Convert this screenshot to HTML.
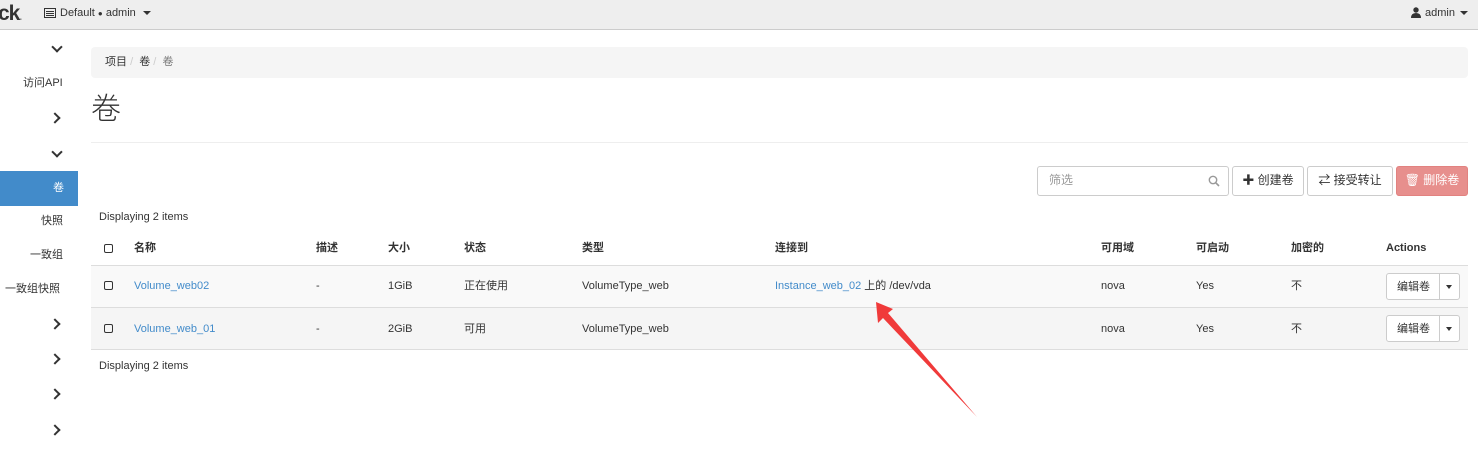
<!DOCTYPE html>
<html><head><meta charset="utf-8"><style>
*{box-sizing:border-box;margin:0;padding:0}
body{width:1478px;height:473px;overflow:hidden;background:#fff;font-family:"Liberation Sans","Noto Sans CJK SC",sans-serif;font-size:11px;color:#333;position:relative}
.a{position:absolute;white-space:nowrap;line-height:15px}
.top{position:absolute;left:0;top:0;width:1478px;height:30px;background:#eee;border-bottom:1px solid #ccc}
.chev{position:absolute;width:8px;height:8px;border-right:2.5px solid #333;border-bottom:2.5px solid #333}
.down{transform:rotate(45deg)}
.right{transform:rotate(-45deg)}
.btn{position:absolute;top:166px;height:30px;border:1px solid #ccc;border-radius:3px;background:#fff;font-size:12px;line-height:27px;text-align:center;color:#333}
.th{font-weight:bold;top:241px}
.cb{position:absolute;width:9px;height:9px;border:1px solid #333;border-radius:2px;left:104px}
.lnk{color:#428bca}
.eb{position:absolute;left:1386px;width:74px;height:27px;border:1px solid #ccc;border-radius:3px;background:#fff}
.eb span{position:absolute;left:10px;top:6px;font-size:11px;line-height:15px}
.eb i{position:absolute;left:52px;top:0;width:1px;height:25px;background:#ccc}
.eb b{position:absolute;left:59px;top:11px;border-left:3.5px solid transparent;border-right:3.5px solid transparent;border-top:4px solid #333}
</style></head><body>
<div class="top"></div>
<div class="a" style="left:-2px;top:3px;font-size:21px;line-height:22px;font-weight:bold;color:#333;letter-spacing:-1px">ck<span style="font-size:10px;color:#888">.</span></div>
<svg class="a" style="left:44px;top:8px" width="12" height="10"><rect x="0.5" y="0.5" width="11" height="9" fill="none" stroke="#333"/><rect x="2" y="3" width="8" height="1" fill="#333"/><rect x="2" y="5" width="8" height="1" fill="#333"/><rect x="2" y="7" width="8" height="1" fill="#333"/></svg>
<div class="a" style="left:60px;top:6px;font-size:11px">Default <span style="font-size:8px">●</span> admin</div>
<div class="a" style="left:143px;top:11px;border-left:4px solid transparent;border-right:4px solid transparent;border-top:4px solid #333"></div>
<svg class="a" style="left:1411px;top:7px" width="10" height="11"><circle cx="5" cy="3" r="2.7" fill="#333"/><path d="M0 11 Q0 6 5 6 Q10 6 10 11Z" fill="#333"/></svg>
<div class="a" style="left:1425px;top:6px">admin</div>
<div class="a" style="left:1460px;top:11px;border-left:4px solid transparent;border-right:4px solid transparent;border-top:4px solid #333"></div>

<div class="chev down" style="left:53px;top:43px"></div>
<div class="a" style="left:23px;top:76px">访问API</div>
<div class="chev right" style="left:51px;top:114px"></div>
<div class="chev down" style="left:53px;top:148px"></div>
<div class="a" style="left:0;top:171px;width:78px;height:35px;background:#428bca"></div>
<div class="a" style="left:53px;top:181px;color:#fff">卷</div>
<div class="a" style="left:41px;top:214px">快照</div>
<div class="a" style="left:30px;top:248px">一致组</div>
<div class="a" style="left:5px;top:282px">一致组快照</div>
<div class="chev right" style="left:51px;top:320px"></div>
<div class="chev right" style="left:51px;top:355px"></div>
<div class="chev right" style="left:51px;top:390px"></div>
<div class="chev right" style="left:51px;top:426px"></div>

<div class="a" style="left:91px;top:47px;width:1377px;height:31px;background:#f5f5f5;border-radius:4px"></div>
<div class="a" style="left:105px;top:55px">项目 <span style="color:#ccc">/</span>&nbsp; 卷 <span style="color:#ccc">/</span>&nbsp; <span style="color:#777">卷</span></div>
<div class="a" style="left:91px;top:92px;font-size:30px;line-height:36px;font-weight:300">卷</div>
<div class="a" style="left:91px;top:142px;width:1377px;height:1px;background:#eee"></div>

<div class="a" style="left:1037px;top:166px;width:192px;height:30px;border:1px solid #ccc;border-radius:3px"></div>
<div class="a" style="left:1049px;top:173px;color:#999;font-size:12px">筛选</div>
<svg class="a" style="left:1208px;top:175px" width="12" height="12"><circle cx="5" cy="5" r="3.7" fill="none" stroke="#999" stroke-width="1.4"/><path d="M7.7 7.7L11 11" stroke="#999" stroke-width="1.6"/></svg>
<div class="btn" style="left:1232px;width:72px">✚ 创建卷</div>
<div class="btn" style="left:1307px;width:86px">⇄ 接受转让</div>
<div class="btn" style="left:1396px;width:72px;background:#e78f8d;border-color:#e28280;color:#fff">🗑 删除卷</div>

<div class="a" style="left:99px;top:210px">Displaying 2 items</div>
<div class="cb" style="top:244px"></div>
<div class="a th" style="left:134px">名称</div>
<div class="a th" style="left:316px">描述</div>
<div class="a th" style="left:388px">大小</div>
<div class="a th" style="left:464px">状态</div>
<div class="a th" style="left:582px">类型</div>
<div class="a th" style="left:775px">连接到</div>
<div class="a th" style="left:1101px">可用域</div>
<div class="a th" style="left:1196px">可启动</div>
<div class="a th" style="left:1291px">加密的</div>
<div class="a th" style="left:1386px">Actions</div>

<div class="a" style="left:91px;top:265px;width:1377px;height:43px;background:#f9f9f9;border-top:1px solid #ddd"></div>
<div class="a" style="left:91px;top:307px;width:1377px;height:43px;background:#f5f5f5;border-top:1px solid #ddd;border-bottom:1px solid #ddd"></div>
<div class="cb" style="top:281px"></div>
<div class="a lnk" style="left:134px;top:279px">Volume_web02</div>
<div class="a" style="left:316px;top:279px">-</div>
<div class="a" style="left:388px;top:279px">1GiB</div>
<div class="a" style="left:464px;top:279px">正在使用</div>
<div class="a" style="left:582px;top:279px">VolumeType_web</div>
<div class="a" style="left:775px;top:279px"><span class="lnk">Instance_web_02</span> 上的 /dev/vda</div>
<div class="a" style="left:1101px;top:279px">nova</div>
<div class="a" style="left:1196px;top:279px">Yes</div>
<div class="a" style="left:1291px;top:279px">不</div>
<div class="eb" style="top:273px"><span>编辑卷</span><i></i><b></b></div>

<div class="cb" style="top:324px"></div>
<div class="a lnk" style="left:134px;top:322px">Volume_web_01</div>
<div class="a" style="left:316px;top:322px">-</div>
<div class="a" style="left:388px;top:322px">2GiB</div>
<div class="a" style="left:464px;top:322px">可用</div>
<div class="a" style="left:582px;top:322px">VolumeType_web</div>
<div class="a" style="left:1101px;top:322px">nova</div>
<div class="a" style="left:1196px;top:322px">Yes</div>
<div class="a" style="left:1291px;top:322px">不</div>
<div class="eb" style="top:315px"><span>编辑卷</span><i></i><b></b></div>

<div class="a" style="left:99px;top:359px">Displaying 2 items</div>

<svg class="a" style="left:0;top:0" width="1478" height="473"><path d="M876 302 L893 309 L888 313 L977 417 L883 318 L878 323 Z" fill="#f03a3a"/></svg>
</body></html>
